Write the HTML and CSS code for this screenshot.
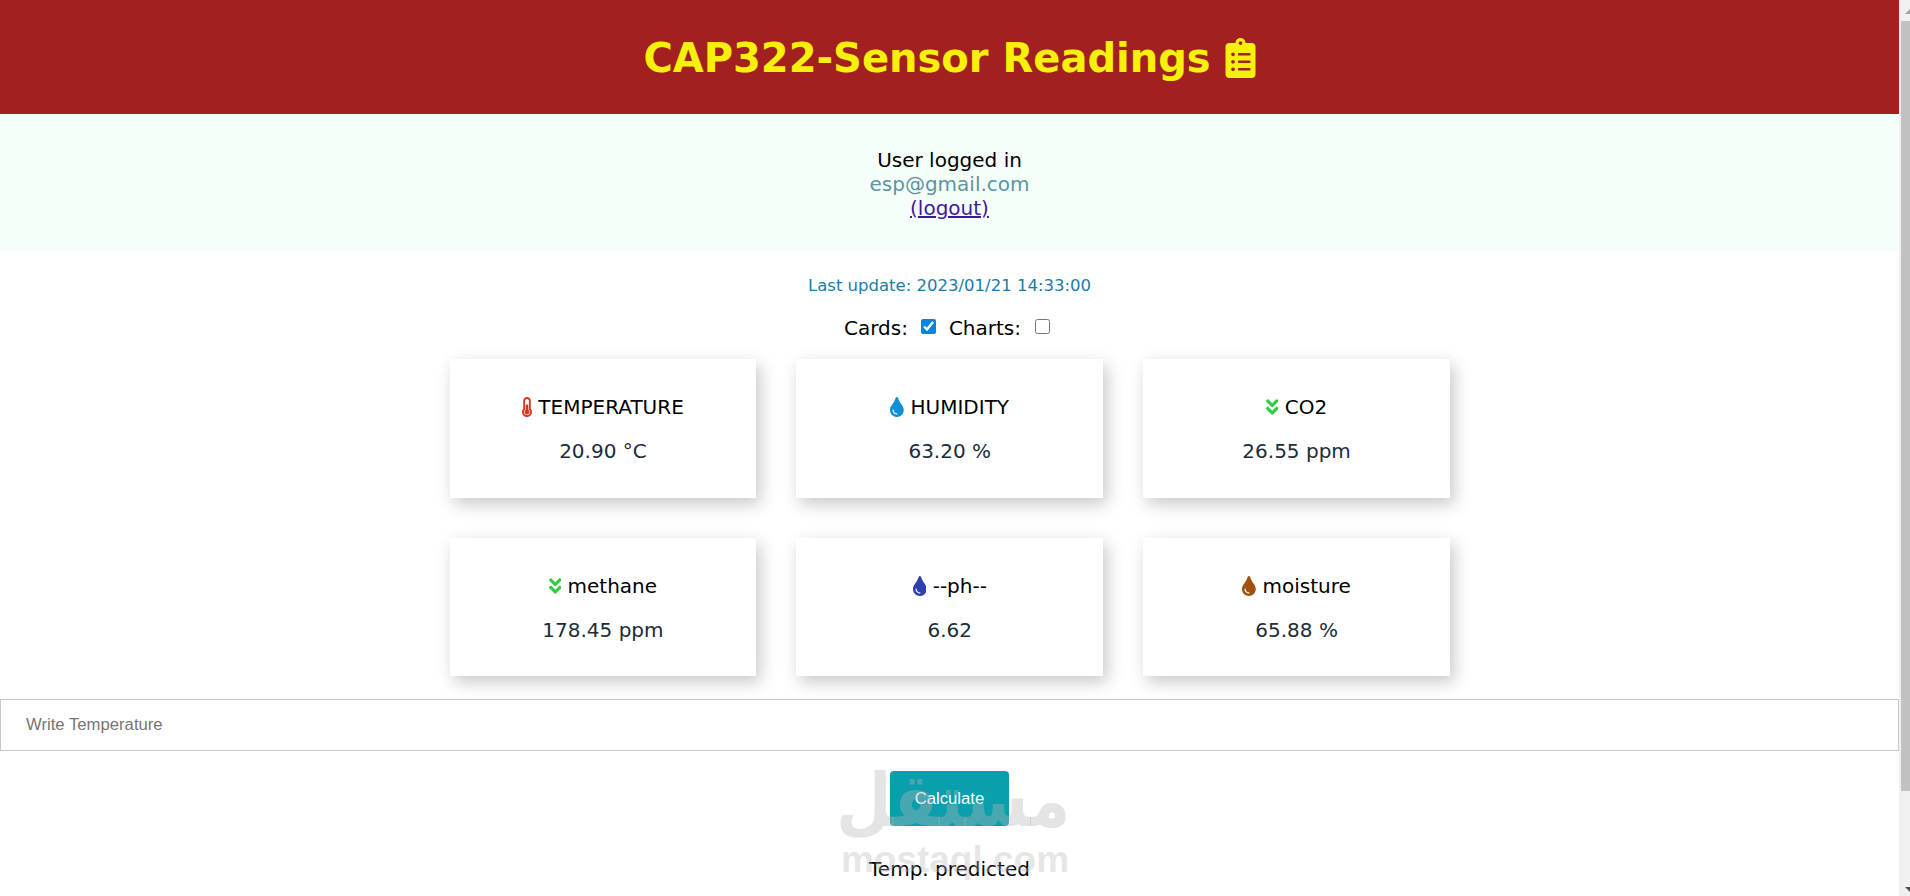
FILE: index.html
```html
<!DOCTYPE html>
<html lang="en">

<head>
    <meta charset="UTF-8" />
    <meta name="viewport" content="width=device-width, initial-scale=1.0" />
    <title>CAP322-Sensor Readings</title>
    <link rel="stylesheet" href="styles.css">
</head>

<body>
    <div class="page">
        <div class="content">
            <div class="topnav">
                <h1>CAP322-Sensor Readings
                    <svg class="title-icon" viewBox="0 0 384 512"><path fill="currentColor" d="M336 64h-80c0-35.3-28.7-64-64-64s-64 28.7-64 64H48C21.5 64 0 85.5 0 112v352c0 26.5 21.5 48 48 48h288c26.5 0 48-21.5 48-48V112c0-26.5-21.5-48-48-48zM96 424c-13.3 0-24-10.7-24-24s10.7-24 24-24 24 10.7 24 24-10.7 24-24 24zm0-96c-13.3 0-24-10.7-24-24s10.7-24 24-24 24 10.7 24 24-10.7 24-24 24zm0-96c-13.3 0-24-10.7-24-24s10.7-24 24-24 24 10.7 24 24-10.7 24-24 24zm96-192c13.3 0 24 10.7 24 24s-10.7 24-24 24-24-10.7-24-24 10.7-24 24-24zm128 368c0 4.4-3.6 8-8 8H168c-4.4 0-8-3.6-8-8v-16c0-4.4 3.6-8 8-8h144c4.4 0 8 3.6 8 8v16zm0-96c0 4.4-3.6 8-8 8H168c-4.4 0-8-3.6-8-8v-16c0-4.4 3.6-8 8-8h144c4.4 0 8 3.6 8 8v16zm0-96c0 4.4-3.6 8-8 8H168c-4.4 0-8-3.6-8-8v-16c0-4.4 3.6-8 8-8h144c4.4 0 8 3.6 8 8v16z"/></svg>
                </h1>
            </div>

            <div class="auth-bar">
                <div>User logged in</div>
                <div class="user-mail">esp@gmail.com</div>
                <a href="#">(logout)</a>
            </div>

            <p class="last-update">Last update: 2023/01/21 14:33:00</p>

            <div class="toggles">
                <label for="cards">Cards:</label>
                <input type="checkbox" id="cards" checked />
                <label for="charts">Charts:</label>
                <input type="checkbox" id="charts" />
            </div>

            <div class="cards">
                <div class="card">
                    <p class="card-title">
                        <svg class="icon thermo" viewBox="0 0 256 512"><path fill="currentColor" d="M192 384c0 35.346-28.654 64-64 64s-64-28.654-64-64c0-23.685 12.876-44.349 32-55.417V224c0-17.673 14.327-32 32-32s32 14.327 32 32v104.583c19.124 11.068 32 31.732 32 55.417zm32-84.653c19.912 22.563 32 52.194 32 84.653 0 70.696-57.303 128-128 128-.299 0-.609-.001-.909-.003C56.789 511.509-.357 453.636.002 383.333.166 351.135 12.225 321.755 32 299.347V96c0-53.019 42.981-96 96-96s96 42.981 96 96v203.347zM208 384c0-34.339-19.37-52.19-32-66.502V96c0-26.467-21.533-48-48-48S80 69.533 80 96v221.498c-12.732 14.428-31.825 32.1-31.999 66.08-.224 43.876 35.563 80.116 79.423 80.42L128 464c44.112 0 80-35.888 80-80z"/></svg>
                        TEMPERATURE
                    </p>
                    <p class="reading">20.90 °C</p>
                </div>
                <div class="card">
                    <p class="card-title">
                        <svg class="icon humid" viewBox="0 0 352 512"><path fill="currentColor" d="M205.22 22.09c-7.94-28.78-49.44-30.12-58.44 0C100.01 179.85 0 222.72 0 333.91 0 432.35 78.72 512 176 512s176-79.65 176-178.09c0-111.75-99.79-153.34-146.78-311.82zM176 448c-61.75 0-112-50.25-112-112 0-8.84 7.16-16 16-16s16 7.16 16 16c0 44.11 35.89 80 80 80 8.84 0 16 7.16 16 16s-7.16 16-16 16z"/></svg>
                        HUMIDITY
                    </p>
                    <p class="reading">63.20 %</p>
                </div>
                <div class="card">
                    <p class="card-title">
                        <svg class="icon gas" viewBox="0 0 320 512"><path fill="currentColor" d="M143 256.3L7 120.3c-9.4-9.4-9.4-24.6 0-33.9l22.6-22.6c9.4-9.4 24.6-9.4 33.9 0l96.4 96.4 96.4-96.4c9.4-9.4 24.6-9.4 33.9 0L313 86.3c9.4 9.4 9.4 24.6 0 33.9l-136 136c-9.4 9.5-24.6 9.5-34 .1zm34 192l136-136c9.4-9.4 9.4-24.6 0-33.9l-22.6-22.6c-9.4-9.4-24.6-9.4-33.9 0L160 352.1l-96.4-96.4c-9.4-9.4-24.6-9.4-33.9 0L7 278.3c-9.4 9.4-9.4 24.6 0 33.9l136 136c9.4 9.5 24.6 9.5 34 .1z"/></svg>
                        CO2
                    </p>
                    <p class="reading">26.55 ppm</p>
                </div>
                <div class="card">
                    <p class="card-title">
                        <svg class="icon gas" viewBox="0 0 320 512"><path fill="currentColor" d="M143 256.3L7 120.3c-9.4-9.4-9.4-24.6 0-33.9l22.6-22.6c9.4-9.4 24.6-9.4 33.9 0l96.4 96.4 96.4-96.4c9.4-9.4 24.6-9.4 33.9 0L313 86.3c9.4 9.4 9.4 24.6 0 33.9l-136 136c-9.4 9.5-24.6 9.5-34 .1zm34 192l136-136c9.4-9.4 9.4-24.6 0-33.9l-22.6-22.6c-9.4-9.4-24.6-9.4-33.9 0L160 352.1l-96.4-96.4c-9.4-9.4-24.6-9.4-33.9 0L7 278.3c-9.4 9.4-9.4 24.6 0 33.9l136 136c9.4 9.5 24.6 9.5 34 .1z"/></svg>
                        methane
                    </p>
                    <p class="reading">178.45 ppm</p>
                </div>
                <div class="card">
                    <p class="card-title">
                        <svg class="icon ph" viewBox="0 0 352 512"><path fill="currentColor" d="M205.22 22.09c-7.94-28.78-49.44-30.12-58.44 0C100.01 179.85 0 222.72 0 333.91 0 432.35 78.72 512 176 512s176-79.65 176-178.09c0-111.75-99.79-153.34-146.78-311.82zM176 448c-61.75 0-112-50.25-112-112 0-8.84 7.16-16 16-16s16 7.16 16 16c0 44.11 35.89 80 80 80 8.84 0 16 7.16 16 16s-7.16 16-16 16z"/></svg>
                        --ph--
                    </p>
                    <p class="reading">6.62</p>
                </div>
                <div class="card">
                    <p class="card-title">
                        <svg class="icon moist" viewBox="0 0 352 512"><path fill="currentColor" d="M205.22 22.09c-7.94-28.78-49.44-30.12-58.44 0C100.01 179.85 0 222.72 0 333.91 0 432.35 78.72 512 176 512s176-79.65 176-178.09c0-111.75-99.79-153.34-146.78-311.82zM176 448c-61.75 0-112-50.25-112-112 0-8.84 7.16-16 16-16s16 7.16 16 16c0 44.11 35.89 80 80 80 8.84 0 16 7.16 16 16s-7.16 16-16 16z"/></svg>
                        moisture
                    </p>
                    <p class="reading">65.88 %</p>
                </div>
            </div>

            <input class="temp-input" type="text" placeholder="Write Temperature" />

            <div class="b1">
                <button id="ok">Calculate</button>
            </div>

            <p class="predicted">Temp. predicted</p>

            <div class="watermark">
                <div class="wm-arabic" lang="ar" dir="rtl">مستقل</div>
                <div class="wm-latin">mostaql.com</div>
            </div>
        </div>

        <div class="scrollbar">
            <div class="arrow-up"></div>
            <div class="thumb"></div>
            <div class="arrow-down"></div>
        </div>
    </div>
</body>

</html>
```

FILE: styles.css
```css
* {
    margin: 0;
    padding: 0;
    box-sizing: border-box;
    font-family: 'DejaVu Sans', Verdana, sans-serif;
}

html,
body {
    height: 100%;
    overflow: hidden;
    background-color: white;
}

.page {
    display: flex;
    height: 896px;
}

.content {
    position: relative;
    flex: 1;
    min-width: 0;
    text-align: center;
    overflow: hidden;
}

.topnav {
    height: 114px;
    padding-top: 2px;
    display: flex;
    align-items: center;
    justify-content: center;
    background-color: #a32020;
}

h1 {
    font-size: 40px;
    line-height: 46px;
    color: #f6f00a;
}

.title-icon {
    width: 31px;
    height: 40px;
    vertical-align: -6px;
}

.auth-bar {
    height: 137px;
    padding-top: 34px;
    background-color: #f5fffa;
    font-size: 20px;
    line-height: 24px;
    color: black;
}

.user-mail {
    color: #5f939f;
}

.auth-bar a {
    color: #40189a;
}

.last-update {
    margin-top: 25px;
    font-size: 16.5px;
    line-height: 20px;
    color: #1a7ca6;
}

.toggles {
    display: flex;
    align-items: center;
    justify-content: center;
    margin-top: 20px;
    height: 24px;
    font-size: 20px;
}

.toggles input {
    width: 15px;
    height: 15px;
    margin: 0 13px 3px 13px;
    accent-color: #0a84d6;
}

.toggles input:last-child {
    margin-left: 14px;
    margin-right: 5px;
}

.cards {
    display: grid;
    grid-template-columns: repeat(3, 1fr);
    gap: 40px;
    width: 1000.5px;
    margin: 19px 0 0 449.5px;
}

.card {
    height: 138.5px;
    padding-top: 36px;
    background-color: white;
    box-shadow: 4px 6px 16px rgba(0, 0, 0, 0.22);
}

.card-title {
    font-size: 20px;
    line-height: 24px;
    color: black;
}

.reading {
    margin-top: 20px;
    font-size: 20px;
    line-height: 24px;
    color: #1c2c3a;
}

.icon {
    height: 20px;
    width: auto;
    vertical-align: -3px;
}

.thermo {
    color: #d63a1e;
}

.humid {
    color: #0f8fd6;
}

.gas {
    color: #2ecc40;
}

.ph {
    color: #2f3fae;
}

.moist {
    color: #a0520d;
}

.temp-input {
    display: block;
    width: 100%;
    height: 52px;
    margin-top: 23px;
    padding: 0 25px;
    border: 1px solid #c8c8c8;
    border-radius: 0;
    outline: none;
    font-family: 'Liberation Sans', Arial, sans-serif;
    font-size: 16.7px;
    background-color: white;
}

.b1 {
    display: flex;
    justify-content: center;
    margin-top: 20px;
}

button {
    width: 119px;
    height: 55px;
    border: 0;
    border-radius: 4px;
    cursor: pointer;
    background-color: #0a9fad;
    color: white;
    font-family: 'Liberation Sans', Arial, sans-serif;
    font-size: 16.7px;
}

.predicted {
    margin-top: 31px;
    font-size: 20px;
    line-height: 24px;
    color: black;
}

/* sits over the button and the text below it */
.watermark {
    position: absolute;
    left: 840px;
    top: 762px;
    width: 230px;
    color: rgba(183, 183, 183, 0.37);
    font-weight: bold;
    pointer-events: none;
}

.wm-arabic {
    font-size: 64px;
    line-height: 78px;
    white-space: nowrap;
    text-align: center;
    transform: scaleY(1.15);
}

.wm-latin {
    font-family: 'Liberation Sans', Arial, sans-serif;
    font-size: 37px;
    line-height: 40px;
    white-space: nowrap;
    text-align: center;
}

.scrollbar {
    position: relative;
    flex: 0 0 11px;
    background-color: #f0f0f0;
}

.thumb {
    position: absolute;
    top: 21px;
    left: 2px;
    right: 0;
    height: 770px;
    background-color: #c1c1c1;
}

.arrow-up,
.arrow-down {
    position: absolute;
    right: 0;
    width: 0;
    height: 0;
    border-left: 5px solid transparent;
    border-right: 0 solid transparent;
}

.arrow-up {
    top: 9px;
    border-bottom: 5px solid #a3a3a3;
}

.arrow-down {
    bottom: 4px;
    border-top: 5px solid #505050;
}
```
